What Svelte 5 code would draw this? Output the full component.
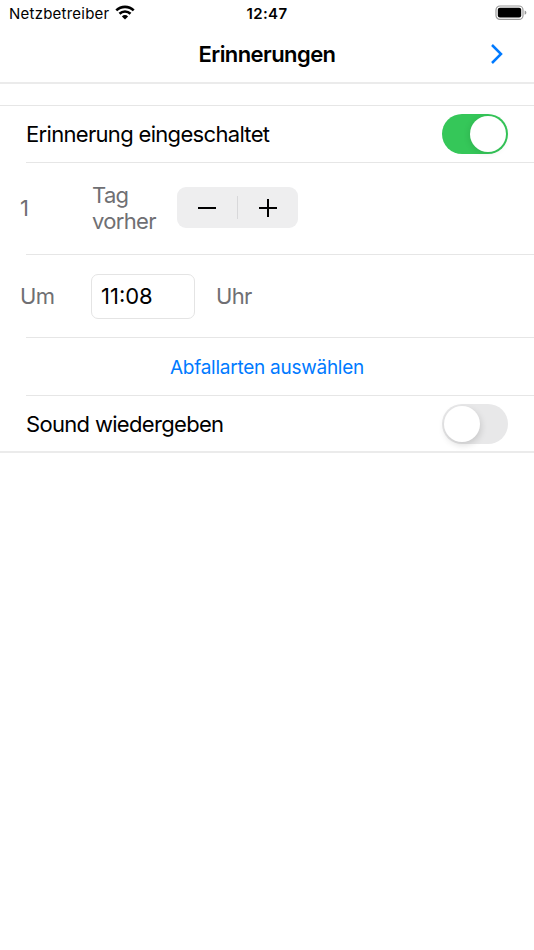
<script>
	let days = 1;
	let time = "11:08";
	let reminder = true;
	let sound = false;
</script>

<div class="screen">
	<div class="status">
		<div class="carrier">
			<span>Netzbetreiber</span>
			<svg width="20" height="15" viewBox="0 0 20 15">
				<g fill="none" stroke="#000" stroke-width="2.6">
					<path d="M1.3 5.4A12.4 12.4 0 0 1 18.7 5.4" />
					<path d="M4.5 8.7A7.9 7.9 0 0 1 15.5 8.7" />
				</g>
				<path d="M10 14.4L6.9 11.4A4.4 4.4 0 0 1 13.1 11.4Z" />
			</svg>
		</div>
		<span class="clock">12:47</span>
		<svg class="battery" width="32" height="16" viewBox="0 0 32 16">
			<rect x="1" y="1" width="27" height="13.4" rx="4" fill="none" stroke="#999" stroke-width="1.2" />
			<rect x="2.8" y="2.8" width="23.4" height="9.8" rx="2" />
			<path d="M29.6 5.6Q31.4 6 31.4 7.7T29.6 9.8Z" fill="#999" />
		</svg>
	</div>

	<header>
		<h1>Erinnerungen</h1>
		<button class="next" aria-label="Weiter">
			<svg width="14" height="22" viewBox="0 0 14 22">
				<path d="M2 2L11 11L2 20" fill="none" stroke="#007aff" stroke-width="2.5" />
			</svg>
		</button>
	</header>

	<div class="list">
		<div class="row toggle-row">
			<span class="label">Erinnerung eingeschaltet</span>
			<button class="switch" class:on={reminder} on:click={() => (reminder = !reminder)} aria-label="Erinnerung"><i></i></button>
		</div>
		<div class="row day-row">
			<span class="first">{days}</span>
			<span class="unit">Tag vorher</span>
			<div class="stepper">
				<button on:click={() => (days -= 1)} aria-label="Weniger">
					<svg width="20" height="20" viewBox="0 0 20 20"><path d="M1 10H19" /></svg>
				</button>
				<div class="divider"></div>
				<button on:click={() => (days += 1)} aria-label="Mehr">
					<svg width="20" height="20" viewBox="0 0 20 20"><path d="M1 10H19M10 1V19" /></svg>
				</button>
			</div>
		</div>
		<div class="row time-row">
			<span class="first">Um</span>
			<div class="time">{time}</div>
			<span>Uhr</span>
		</div>
		<div class="row link-row">
			<button class="link">Abfallarten auswählen</button>
		</div>
		<div class="row toggle-row last">
			<span class="label">Sound wiedergeben</span>
			<button class="switch" class:on={sound} on:click={() => (sound = !sound)} aria-label="Sound"><i></i></button>
		</div>
	</div>
</div>

<style>
	:global(body) {
		margin: 0;
		background: #fff;
	}
	.screen {
		min-height: 950px;
		font-family: Inter, "Liberation Sans", sans-serif;
		font-size: 22px;
		color: #000;
	}
	button {
		padding: 0;
		border: none;
		background: none;
		font: inherit;
	}
	svg {
		display: block;
	}
	.status {
		display: grid;
		grid-template-columns: 1fr auto 1fr;
		align-items: center;
		height: 27px;
		padding: 0 7px 0 9px;
		font-size: 15px;
		line-height: 27px;
	}
	.carrier {
		display: flex;
		align-items: center;
		gap: 6px;
		letter-spacing: 0.23px;
	}
	.carrier svg {
		margin-top: -2px;
	}
	.clock {
		margin-right: 2px;
		font-weight: 600;
		letter-spacing: 0.4px;
	}
	.battery {
		justify-self: end;
		margin-top: -1px;
	}
	header {
		display: grid;
		grid-template-columns: 1fr auto 1fr;
		align-items: center;
		box-sizing: border-box;
		height: 57px;
		border-bottom: 2px solid #ebebeb;
		padding: 0 30px 2px;
	}
	h1 {
		grid-column: 2;
		margin: 0;
		font-size: 22px;
		font-weight: 600;
		letter-spacing: -0.58px;
	}
	.next {
		justify-self: end;
	}
	.list {
		margin-top: 21px;
		border-top: 1px solid #e6e6e6;
		border-bottom: 2px solid #ebebeb;
	}
	.row {
		display: flex;
		align-items: center;
		box-sizing: border-box;
		color: #6f6f73;
		letter-spacing: -0.68px;
		background: linear-gradient(#e6e6e6, #e6e6e6) 26px 100% / 100% 1px no-repeat;
	}
	.toggle-row {
		justify-content: space-between;
		height: 57px;
		padding: 0 26px 2px;
	}
	.last {
		height: 55px;
		padding-bottom: 0;
		background: none;
	}
	.label {
		color: #000;
	}
	.switch {
		width: 66px;
		height: 40px;
		padding: 2px;
		border-radius: 20px;
		background: #e8e8e9;
	}
	.switch i {
		display: block;
		width: 36px;
		height: 36px;
		border-radius: 50%;
		background: #fff;
		box-shadow: 1px 3px 7px rgba(0, 0, 0, 0.14);
	}
	.switch.on {
		background: #35c759;
	}
	.switch.on i {
		margin-left: 26px;
		box-shadow: -1px 1px 6px rgba(0, 0, 0, 0.1);
	}
	.day-row {
		height: 92px;
		padding: 0 0 3px 20px;
	}
	.first {
		width: 72px;
	}
	.day-row .first {
		padding-top: 1px;
	}
	.unit {
		width: 85px;
		padding-top: 1px;
		line-height: 26px;
	}
	.stepper {
		display: flex;
		align-items: center;
		width: 121px;
		height: 41px;
		border-radius: 9px;
		background: #eeeeef;
	}
	.stepper button {
		display: flex;
		flex: 1;
		justify-content: center;
	}
	.stepper path {
		fill: none;
		stroke: #000;
		stroke-width: 2;
	}
	.divider {
		width: 1px;
		height: 23px;
		background: #d8d8da;
	}
	.time-row {
		height: 83px;
		padding: 0 0 1px 20px;
	}
	.time-row .first {
		width: 71px;
	}
	.time {
		box-sizing: border-box;
		width: 104px;
		height: 45px;
		margin-right: 21px;
		border: 1px solid #e4e4e4;
		border-radius: 7px;
		padding-left: 9px;
		line-height: 43px;
		letter-spacing: 0;
		color: #000;
	}
	.link-row {
		justify-content: center;
		height: 58px;
	}
	.link {
		font-size: 19px;
		letter-spacing: -0.26px;
		color: #007aff;
	}
</style>
